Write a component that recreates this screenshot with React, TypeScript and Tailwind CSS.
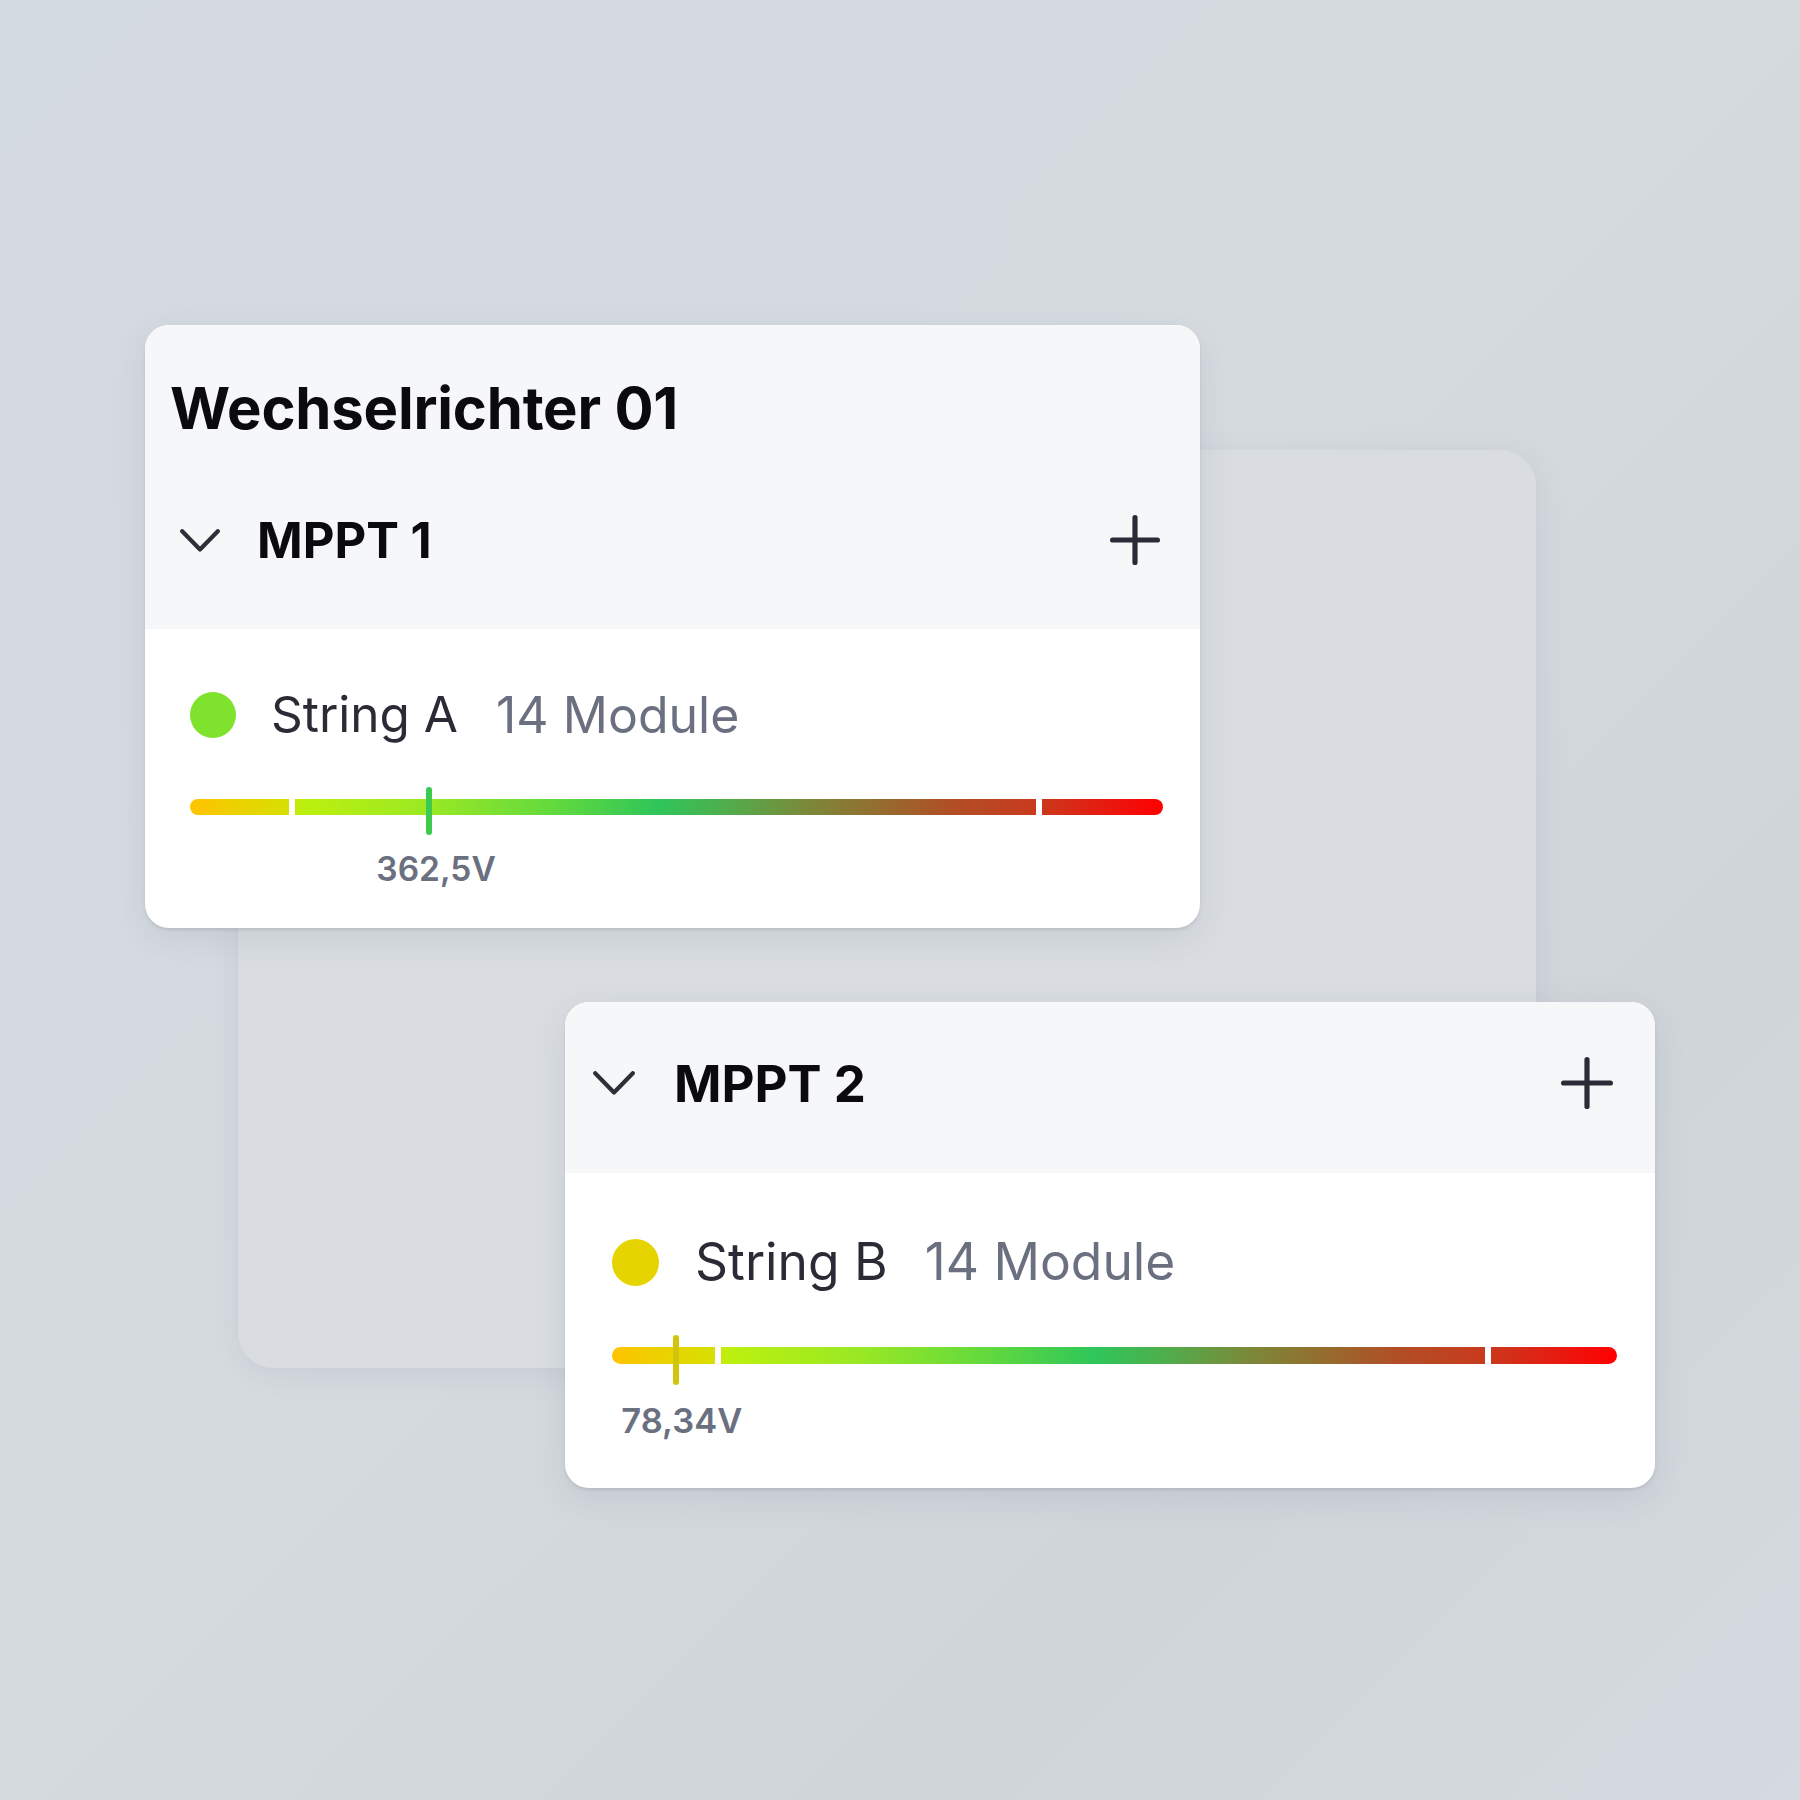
import React from "react";

type Size = {
  card: string;
  header: string;
  row: string;
  chevron: { w: number; h: number };
  mppt: string;
  plus: number;
  body: string;
  stringRow: string;
  dot: string;
  stringText: string;
  moduleText: string;
  barWrap: string;
  bar: string;
  marker: string;
  labelWrap: string;
  label: string;
  labelShift: number;
};

const small: Size = {
  card: "ml-[145px] w-[1055px]",
  header: "pt-[53px] pb-[64px]",
  row: "h-[50px] pl-[35px] pr-[40px]",
  chevron: { w: 40, h: 23 },
  mppt: "ml-[37px] text-[49px]",
  plus: 50,
  body: "pt-[61px] pb-[42px] pl-[45px] pr-[37px]",
  stringRow: "h-[50px]",
  dot: "w-[46px] h-[46px]",
  stringText: "ml-[35px] text-[49.5px]",
  moduleText: "ml-[38px] text-[50px]",
  barWrap: "mt-[59px]",
  bar: "h-[16px]",
  marker: "-top-[12px] h-[48px]",
  labelWrap: "mt-[37px]",
  label: "text-[33.5px] leading-[34px]",
  labelShift: 53,
};

const big: Size = {
  card: "mt-[74px] ml-[565px] w-[1090px]",
  header: "pt-[55px] pb-[64px]",
  row: "h-[52px] pl-[28px] pr-[42px]",
  chevron: { w: 42, h: 24 },
  mppt: "ml-[39px] text-[51px]",
  plus: 52,
  body: "pt-[63px] pb-[49px] pl-[47px] pr-[38px]",
  stringRow: "h-[52px]",
  dot: "w-[47px] h-[47px]",
  stringText: "ml-[36px] text-[51.5px]",
  moduleText: "ml-[37px] text-[51.5px]",
  barWrap: "mt-[59px]",
  bar: "h-[17px]",
  marker: "-top-[12px] h-[50px]",
  labelWrap: "mt-[39px]",
  label: "text-[34.5px] leading-[36px]",
  labelShift: 55,
};

const strings = [
  { mppt: "MPPT 1", name: "String A", modules: "14 Module", volts: "362,5V", pos: 24.6, dot: "bg-[#7fe22d]", marker: "bg-[#3ec94f]", size: small, title: "Wechselrichter 01" },
  { mppt: "MPPT 2", name: "String B", modules: "14 Module", volts: "78,34V", pos: 6.4, dot: "bg-[#e6d400]", marker: "bg-[#d2c40a]", size: big, title: "" },
];

const barGradient =
  "bg-[linear-gradient(90deg,#ffc300_0%,#d8df00_10%,#bdf00e_11.5%,#98e825_25%,#5fd83f_38%,#2fc65a_48%,#4fae4c_55%,#7a8a3a_63%,#92702f_70%,#b04f26_78%,#c93a1d_87%,#e31f12_93%,#ff0000_100%)]";

const Chevron = ({ w, h }: { w: number; h: number }) => (
  <svg width={w} height={h} viewBox={`0 0 ${w} ${h}`} fill="none" className="shrink-0">
    <polyline
      points={`2.2,2.2 ${w / 2},${h - 2.5} ${w - 2.2},2.2`}
      stroke="#2f2f3a"
      strokeWidth="4.2"
      strokeLinecap="round"
      strokeLinejoin="round"
    />
  </svg>
);

const Plus = ({ s }: { s: number }) => (
  <svg width={s} height={s} viewBox={`0 0 ${s} ${s}`} fill="none" className="shrink-0">
    <path d={`M2.6 ${s / 2}H${s - 2.6}M${s / 2} 2.6V${s - 2.6}`} stroke="#2b2b37" strokeWidth="5.2" strokeLinecap="round" />
  </svg>
);

const MpptCard = ({ item }: { item: (typeof strings)[number] }) => {
  const sz = item.size;
  return (
    <div className={`relative z-10 ${sz.card} rounded-[24px] overflow-hidden bg-white shadow-[0_2px_3px_rgba(60,70,85,0.12),0_10px_34px_rgba(60,70,85,0.10)]`}>
      <div className={`bg-[#f6f7f9] ${sz.header}`}>
        {item.title && (
          <h1 className="pl-[25px] mb-[77px] text-[58px] leading-[60px] font-bold text-[#0b0b0d] tracking-[-0.2px]">
            {item.title}
          </h1>
        )}
        <div className={`flex items-center ${sz.row}`}>
          <Chevron w={sz.chevron.w} h={sz.chevron.h} />
          <span className={`${sz.mppt} leading-none font-bold text-[#0b0b0d]`}>{item.mppt}</span>
          <div className="flex-1" />
          <Plus s={sz.plus} />
        </div>
      </div>

      <div className={sz.body}>
        <div className={`flex items-center ${sz.stringRow}`}>
          <span className={`${sz.dot} rounded-full ${item.dot} shrink-0`} />
          <span className={`${sz.stringText} leading-none text-[#2b2b36]`}>{item.name}</span>
          <span className={`${sz.moduleText} leading-none text-[#6b7080]`}>{item.modules}</span>
        </div>

        {/* gradient scale with two separators */}
        <div className={`relative ${sz.barWrap}`}>
          <div className={`${sz.bar} rounded-full ${barGradient}`} />
          <span className="absolute top-0 bottom-0 left-[10.2%] w-[6px] bg-white" />
          <span className="absolute top-0 bottom-0 left-[86.9%] w-[6px] bg-white" />
          <span
            className={`absolute ${sz.marker} w-[6px] rounded-full ${item.marker}`}
            style={{ left: `calc(${item.pos}% - 3px)` }}
          />
        </div>

        <div className={sz.labelWrap} style={{ marginLeft: `calc(${item.pos}% - ${sz.labelShift}px)` }}>
          <span className={`${sz.label} font-semibold text-[#6b7080] block`}>{item.volts}</span>
        </div>
      </div>
    </div>
  );
};

export default function App() {
  return (
    <div
      className="relative w-[1800px] h-[1800px] overflow-hidden bg-[linear-gradient(135deg,#d4dae1_0%,#d6dbe0_45%,#d0d5da_75%,#d5dae0_100%)] pt-[325px]"
      style={{ fontFamily: "Inter, 'Noto Sans', sans-serif" }}
    >
      {/* back panel behind the cards */}
      <div className="absolute left-[238px] top-[450px] w-[1298px] h-[918px] rounded-[36px] bg-[#d9dde1] shadow-[0_6px_30px_rgba(80,90,105,0.10)]" />

      {strings.map((s) => (
        <MpptCard key={s.mppt} item={s} />
      ))}
    </div>
  );
}
